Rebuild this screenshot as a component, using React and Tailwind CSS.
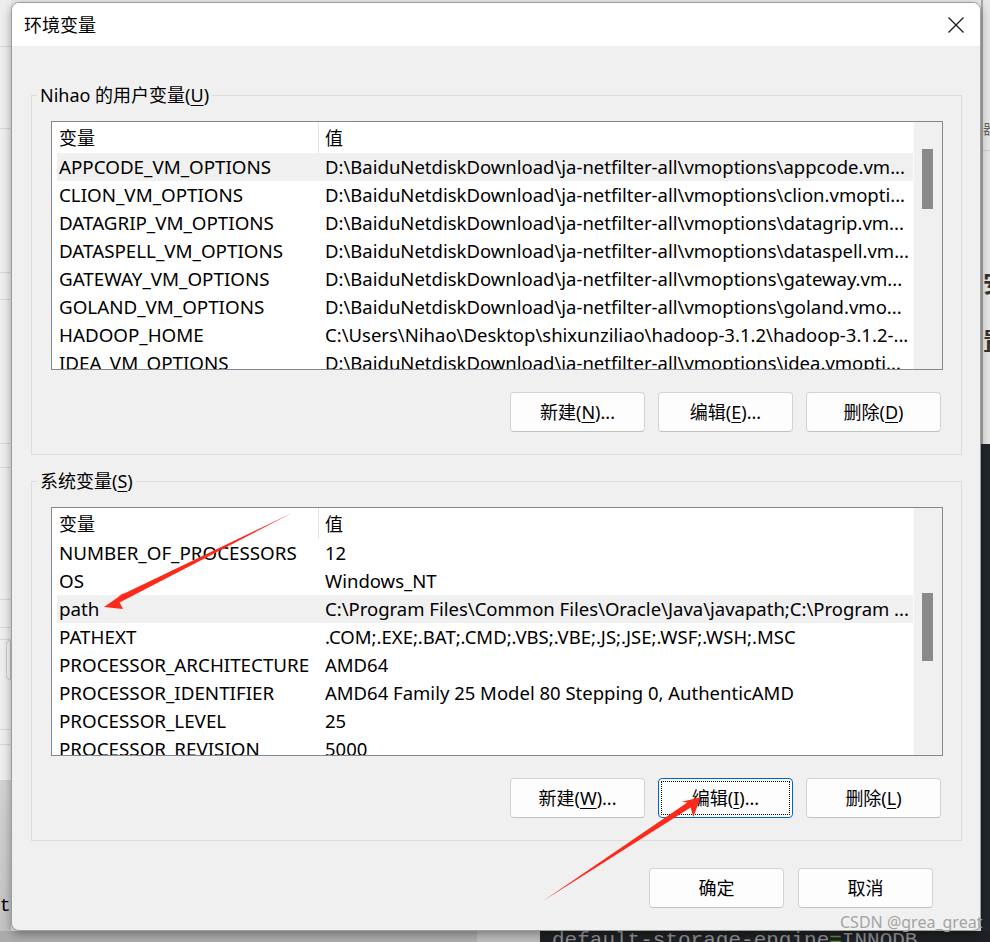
import React from "react";

const FONT = "font-['Noto_Sans','Noto_Sans_CJK_SC',sans-serif]";

const userVars = [
  ["APPCODE_VM_OPTIONS", "D:\\BaiduNetdiskDownload\\ja-netfilter-all\\vmoptions\\appcode.vm..."],
  ["CLION_VM_OPTIONS", "D:\\BaiduNetdiskDownload\\ja-netfilter-all\\vmoptions\\clion.vmopti..."],
  ["DATAGRIP_VM_OPTIONS", "D:\\BaiduNetdiskDownload\\ja-netfilter-all\\vmoptions\\datagrip.vm..."],
  ["DATASPELL_VM_OPTIONS", "D:\\BaiduNetdiskDownload\\ja-netfilter-all\\vmoptions\\dataspell.vm..."],
  ["GATEWAY_VM_OPTIONS", "D:\\BaiduNetdiskDownload\\ja-netfilter-all\\vmoptions\\gateway.vm..."],
  ["GOLAND_VM_OPTIONS", "D:\\BaiduNetdiskDownload\\ja-netfilter-all\\vmoptions\\goland.vmo..."],
  ["HADOOP_HOME", "C:\\Users\\Nihao\\Desktop\\shixunziliao\\hadoop-3.1.2\\hadoop-3.1.2-..."],
  ["IDEA_VM_OPTIONS", "D:\\BaiduNetdiskDownload\\ja-netfilter-all\\vmoptions\\idea.vmopti..."],
];

const sysVars = [
  ["NUMBER_OF_PROCESSORS", "12"],
  ["OS", "Windows_NT"],
  ["path", "C:\\Program Files\\Common Files\\Oracle\\Java\\javapath;C:\\Program ..."],
  ["PATHEXT", ".COM;.EXE;.BAT;.CMD;.VBS;.VBE;.JS;.JSE;.WSF;.WSH;.MSC"],
  ["PROCESSOR_ARCHITECTURE", "AMD64"],
  ["PROCESSOR_IDENTIFIER", "AMD64 Family 25 Model 80 Stepping 0, AuthenticAMD"],
  ["PROCESSOR_LEVEL", "25"],
  ["PROCESSOR_REVISION", "5000"],
];

function Key({ children }) {
  return <span className="underline underline-offset-[3px] decoration-1">{children}</span>;
}

function Btn({ children, focus }) {
  return (
    <button
      className={
        focus
          ? "w-[135px] h-[40px] rounded-[4px] bg-[#fdfdfd] border border-[#0067c0] outline-1 outline-dotted outline-black outline-offset-[-4px] text-[18px] leading-none text-black"
          : "w-[135px] h-[40px] rounded-[4px] bg-[#fdfdfd] border border-[#d3d3d3] border-b-[#c2c2c2] text-[18px] leading-none text-black"
      }
    >
      {children}
    </button>
  );
}

function VarList({ rows, selected, thumbTop, thumbHeight }) {
  return (
    <div className="h-[249px] flex border border-[#828790] bg-white overflow-hidden">
      <div className="w-[861px] flex flex-col">
        <div className="h-[31px] shrink-0 flex items-stretch text-[18px] leading-none">
          <div className="w-[266px] pl-[7px] flex items-center">变量</div>
          <div className="w-px bg-[#e5e5e5]" />
          <div className="pl-[6px] flex items-center">值</div>
        </div>
        {rows.map(([k, v], i) => (
          <div
            key={k}
            className={
              i === selected
                ? "ml-[5px] h-[28px] shrink-0 flex items-center bg-[#f0f0f0] leading-[28px] whitespace-nowrap"
                : "ml-[5px] h-[28px] shrink-0 flex items-center leading-[28px] whitespace-nowrap"
            }
          >
            <div className="w-[261px] pl-[2px] overflow-hidden text-[18.8px]">{k}</div>
            <div className="flex-1 pl-[7px] overflow-hidden text-[18.5px]">{v}</div>
          </div>
        ))}
      </div>
      <div className="flex-1 bg-[#f0f0f0] border-l border-[#fafafa] pl-[8px]">
        <div className="w-[11px] bg-[#8a8a8a]" style={{ marginTop: thumbTop, height: thumbHeight }} />
      </div>
    </div>
  );
}

function Group({ label, children, className }) {
  return (
    <fieldset className={"border border-[#dcdcdc] px-[5px] pb-[22px] " + (className || "")}>
      <legend className="px-[3px] text-[18px] leading-[20px]">{label}</legend>
      <div className="pl-[14px] pr-[13px] pt-[16px]">{children}</div>
    </fieldset>
  );
}

function LeftStrip() {
  const segs = [47, 82, 144, 27, 144, 24, 132, 28, 12];
  return (
    <div className="w-[11px] flex flex-col bg-[#eeeeee]">
      {segs.map((h, i) => (
        <div key={i} className="border-b border-[#d6d6d6] shrink-0" style={{ height: h }} />
      ))}
      <div className="h-[40px] ml-[6px] border border-[#c8c8c8] rounded-l-[4px] bg-[#f7f7f7]" />
      <div className="h-[50px] border-b border-[#d6d6d6]" />
      <div className="h-[15px] border-b border-[#d6d6d6]" />
      <div className="h-[36px] border-b border-[#cfcfcf]" />
      <div className="flex-1 bg-gradient-to-b from-[#d2d2d2] to-[#c2c2c2] flex flex-col justify-end pb-[16px]">
        <div className="font-['Liberation_Mono',monospace] text-[18px] leading-none text-black -ml-[11px] whitespace-nowrap">nt</div>
      </div>
    </div>
  );
}

function RightStrip() {
  return (
    <div className="w-[9px] flex flex-col overflow-hidden">
      <div className="h-[444px] bg-[#e6e6e6] flex flex-col border-l-[2px] border-[#a8a8a8]">
        <div className="h-[151px] border-b border-[#cfcfcf] flex flex-col justify-end pb-[14px]">
          <div className="text-[14px] leading-none text-[#666] whitespace-nowrap">器</div>
        </div>
        <div className="h-[118px]" />
        <div className="text-[24px] font-bold leading-[28px] text-[#333] whitespace-nowrap">安</div>
        <div className="h-[30px]" />
        <div className="text-[24px] font-bold leading-[28px] text-[#333] whitespace-nowrap">置</div>
      </div>
      <div className="flex-1 bg-[#23262c]" />
    </div>
  );
}

function Dialog() {
  return (
    <div className="relative z-10 w-[970px] h-[929px] mt-[2px] rounded-[8px] border border-[#9e9e9e] bg-[#f0f0f0] overflow-hidden shadow-[0_3px_10px_rgba(0,0,0,0.35)] flex flex-col text-black">
      <div className="h-[43px] shrink-0 bg-white flex items-center justify-between pl-[12px] pr-[16px]">
        <span className="text-[18px] leading-none">环境变量</span>
        <svg width="16" height="16" viewBox="0 0 16 16">
          <path d="M0.5 0.5 L15.5 15.5 M15.5 0.5 L0.5 15.5" stroke="#1a1a1a" strokeWidth="1.3" fill="none" />
        </svg>
      </div>
      <div className="flex-1 flex flex-col pl-[19px] pr-[18px] pt-[39px]">
        <Group
          label={
            <>
              Nihao 的用户变量(<Key>U</Key>)
            </>
          }
        >
          <VarList rows={userVars} selected={0} thumbTop={27} thumbHeight={60} />
          <div className="mt-[22px] flex justify-end gap-[13px] pr-[2px]">
            <Btn>
              新建(<Key>N</Key>)...
            </Btn>
            <Btn>
              编辑(<Key>E</Key>)...
            </Btn>
            <Btn>
              删除(<Key>D</Key>)
            </Btn>
          </div>
        </Group>
        <Group
          className="mt-[16px]"
          label={
            <>
              系统变量(<Key>S</Key>)
            </>
          }
        >
          <VarList rows={sysVars} selected={2} thumbTop={85} thumbHeight={68} />
          <div className="mt-[22px] flex justify-end gap-[13px] pr-[2px]">
            <Btn>
              新建(<Key>W</Key>)...
            </Btn>
            <Btn focus>
              编辑(<Key>I</Key>)...
            </Btn>
            <Btn>
              删除(<Key>L</Key>)
            </Btn>
          </div>
        </Group>
        <div className="mt-[27px] flex justify-end gap-[14px] pr-[29px]">
          <Btn>确定</Btn>
          <Btn>取消</Btn>
        </div>
      </div>
    </div>
  );
}

export default function App() {
  return (
    <div className={"relative w-[990px] h-[942px] overflow-hidden flex flex-col bg-[#e9e9e9] " + FONT}>
      <div className="h-[931px] flex shrink-0">
        <LeftStrip />
        <Dialog />
        <RightStrip />
      </div>
      <div className="flex-1 flex">
        <div className="w-[477px] bg-[#ababab]" />
        <div className="w-[63px] bg-[#bcbcbc]" />
        <div className="flex-1 bg-[#1f2023] pl-[12px] overflow-hidden">
          <div className="-mt-[1px] font-['Liberation_Mono',monospace] text-[21px] leading-none text-[#8d8f94] whitespace-nowrap">
            default-storage-engine<span className="text-[#5f8a3a]">=</span>INNODB
          </div>
        </div>
      </div>

      <div className="absolute left-[840px] top-[912px] z-20 text-[16px] leading-[20px] text-[#a3a3a3] whitespace-nowrap">
        CSDN @grea_great
      </div>

      <svg className="absolute inset-0 z-30 pointer-events-none" width="990" height="942" viewBox="0 0 990 942">
        <polygon points="292,513 119.6,602.5 123,609 104,607 127,591 116.9,597.1" fill="#fb2a1b" />
        <polygon points="543,901 690.7,807.5 693.3,817.3 700.7,797.3 681.7,801.7 687.3,802.5" fill="#fb2a1b" />
      </svg>
    </div>
  );
}
